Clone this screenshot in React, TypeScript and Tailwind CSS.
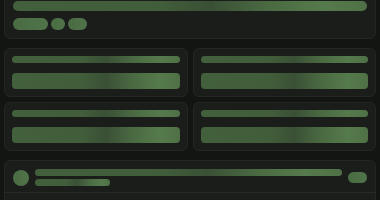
import React from 'react';

const shimmer =
  'bg-[linear-gradient(90deg,#43603c_0%,#415d3a_42%,#3a5035_56%,#4a6a42_72%,#557a4c_88%,#4f7046_100%)]';
const solid = 'bg-[linear-gradient(90deg,#4a6b43_0%,#507449_100%)]';

const Bar: React.FC<{ className?: string; plain?: boolean }> = ({ className = '', plain }) => (
  <div className={`${plain ? solid : shimmer} ${className}`} />
);

const StatCard: React.FC = () => (
  <div className="rounded-md border border-[#232623] bg-[#1b1d1b] p-[7px]">
    <Bar className="h-[7px] rounded-full" />
    <Bar className="mt-[10px] h-4 rounded" />
  </div>
);

const ListRow: React.FC<{ last?: boolean }> = ({ last }) => (
  <div className={`flex items-center gap-[6px] px-2 pt-2 pb-[6px] ${last ? '' : 'border-b border-[#272a27]'}`}>
    <Bar plain className="h-4 w-4 shrink-0 rounded-full" />
    <div className="flex min-w-0 flex-1 flex-col gap-[3px]">
      <Bar className="h-[7px] rounded-full" />
      <Bar className="h-[7px] w-[75px] rounded-full" />
    </div>
    <Bar plain className="h-[11px] w-[19px] shrink-0 rounded-full" />
  </div>
);

export default function App() {
  return (
    <div className="h-[200px] w-[380px] overflow-hidden bg-[#131513] font-['Liberation_Sans',sans-serif]">
      <div className="-mt-[8px] flex flex-col gap-[9px] px-1">
        <div className="rounded-md border border-[#232623] bg-[#1b1d1b] p-2">
          <Bar className="h-[10px] rounded-full" />
          <div className="mt-[7px] flex gap-[3px]">
            <Bar plain className="h-3 w-[35px] rounded-full" />
            <Bar plain className="h-3 w-[14px] rounded-full" />
            <Bar plain className="h-3 w-[19px] rounded-full" />
          </div>
        </div>

        <div className="grid grid-cols-2 gap-[5px]">
          <StatCard />
          <StatCard />
          <StatCard />
          <StatCard />
        </div>

        <div className="rounded-md border border-[#232623] bg-[#1b1d1b]">
          <ListRow />
          <ListRow />
          <ListRow last />
        </div>
      </div>
    </div>
  );
}
